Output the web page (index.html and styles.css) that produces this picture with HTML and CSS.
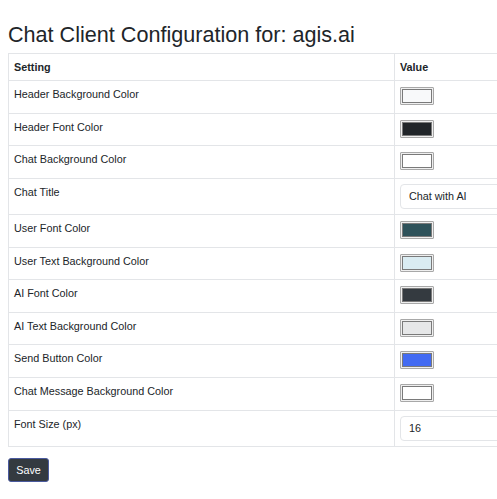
FILE: index.html
```html
<!DOCTYPE html>
<html lang="en">
<head>
<meta charset="utf-8">
<title>Chat Client Configuration</title>
<link rel="stylesheet" href="styles.css">
</head>
<body>
<main class="page">
  <h1 class="title">Chat Client Configuration for: agis.ai</h1>
  <form class="config-form">
    <div class="table-wrap">
      <table class="config-table">
        <colgroup>
          <col class="col-setting">
          <col class="col-value">
        </colgroup>
        <thead>
          <tr><th>Setting</th><th>Value</th></tr>
        </thead>
        <tbody>
          <tr>
            <td>Header Background Color</td>
            <td><span class="swatch"><span class="swatch-fill" style="background:#f8f9fa"></span></span></td>
          </tr>
          <tr>
            <td>Header Font Color</td>
            <td><span class="swatch"><span class="swatch-fill" style="background:#212529"></span></span></td>
          </tr>
          <tr>
            <td>Chat Background Color</td>
            <td><span class="swatch"><span class="swatch-fill" style="background:#ffffff"></span></span></td>
          </tr>
          <tr class="row-input">
            <td>Chat Title</td>
            <td><input class="text-field" type="text" value="Chat with AI"></td>
          </tr>
          <tr>
            <td>User Font Color</td>
            <td><span class="swatch"><span class="swatch-fill" style="background:#2e525a"></span></span></td>
          </tr>
          <tr>
            <td>User Text Background Color</td>
            <td><span class="swatch"><span class="swatch-fill" style="background:#daecf2"></span></span></td>
          </tr>
          <tr>
            <td>AI Font Color</td>
            <td><span class="swatch"><span class="swatch-fill" style="background:#343a40"></span></span></td>
          </tr>
          <tr>
            <td>AI Text Background Color</td>
            <td><span class="swatch"><span class="swatch-fill" style="background:#e6e7e8"></span></span></td>
          </tr>
          <tr>
            <td>Send Button Color</td>
            <td><span class="swatch"><span class="swatch-fill" style="background:#436bf2"></span></span></td>
          </tr>
          <tr>
            <td>Chat Message Background Color</td>
            <td><span class="swatch"><span class="swatch-fill" style="background:#ffffff"></span></span></td>
          </tr>
          <tr class="row-input">
            <td>Font Size (px)</td>
            <td><input class="text-field" type="text" value="16"></td>
          </tr>
        </tbody>
      </table>
    </div>
    <button class="btn-save" type="button">Save</button>
  </form>
</main>
</body>
</html>
```

FILE: styles.css
```css
html {
  overflow: hidden;
}

body {
  margin: 8px 0 8px 8px;
  background: #ffffff;
  color: #212529;
  font-family: "Liberation Sans", Arial, sans-serif;
  font-size: 10.8px;
  line-height: 16px;
}

.title {
  margin: 13px 0 5px;
  font-size: 21.6px;
  font-weight: 400;
  line-height: 27px;
  color: #212529;
}

.config-form {
  margin: 0;
}

/* the value column is wider than the window; the wrapper trims it */
.table-wrap {
  overflow: hidden;
  margin-bottom: 11px;
}

.config-table {
  width: 620px;
  border-collapse: collapse;
  table-layout: fixed;
}

.col-setting {
  width: 386px;
}

.config-table th,
.config-table td {
  border: 1px solid #e3e5e8;
  padding: 5px 5px;
  text-align: left;
  vertical-align: top;
  line-height: 16px;
}

.config-table th {
  font-weight: 700;
}

.config-table td {
  height: 21.65px;
}

.row-input td {
  height: 24.5px;
}

.swatch {
  display: block;
  box-sizing: border-box;
  width: 34px;
  height: 18px;
  margin-top: 1px;
  padding: 1px;
  border: 1px solid #a8a8a8;
  border-radius: 1px;
  background: #efefef;
}

.swatch-fill {
  display: block;
  box-sizing: border-box;
  width: 100%;
  height: 100%;
  border: 1px solid #7a7a7a;
}

.text-field {
  display: block;
  box-sizing: border-box;
  width: 200px;
  height: 25px;
  margin: 0;
  padding: 0 8px;
  border: 1px solid #e3e5e8;
  border-radius: 4px;
  background: #ffffff;
  color: #212529;
  font-family: "Liberation Sans", Arial, sans-serif;
  font-size: 10.8px;
}

.btn-save {
  display: block;
  box-sizing: border-box;
  width: 41px;
  height: 24px;
  padding: 0;
  border: 1px solid #4a5a9e;
  border-radius: 3px;
  background: #343a40;
  color: #ffffff;
  font-family: "Liberation Sans", Arial, sans-serif;
  font-size: 10.8px;
}
```
